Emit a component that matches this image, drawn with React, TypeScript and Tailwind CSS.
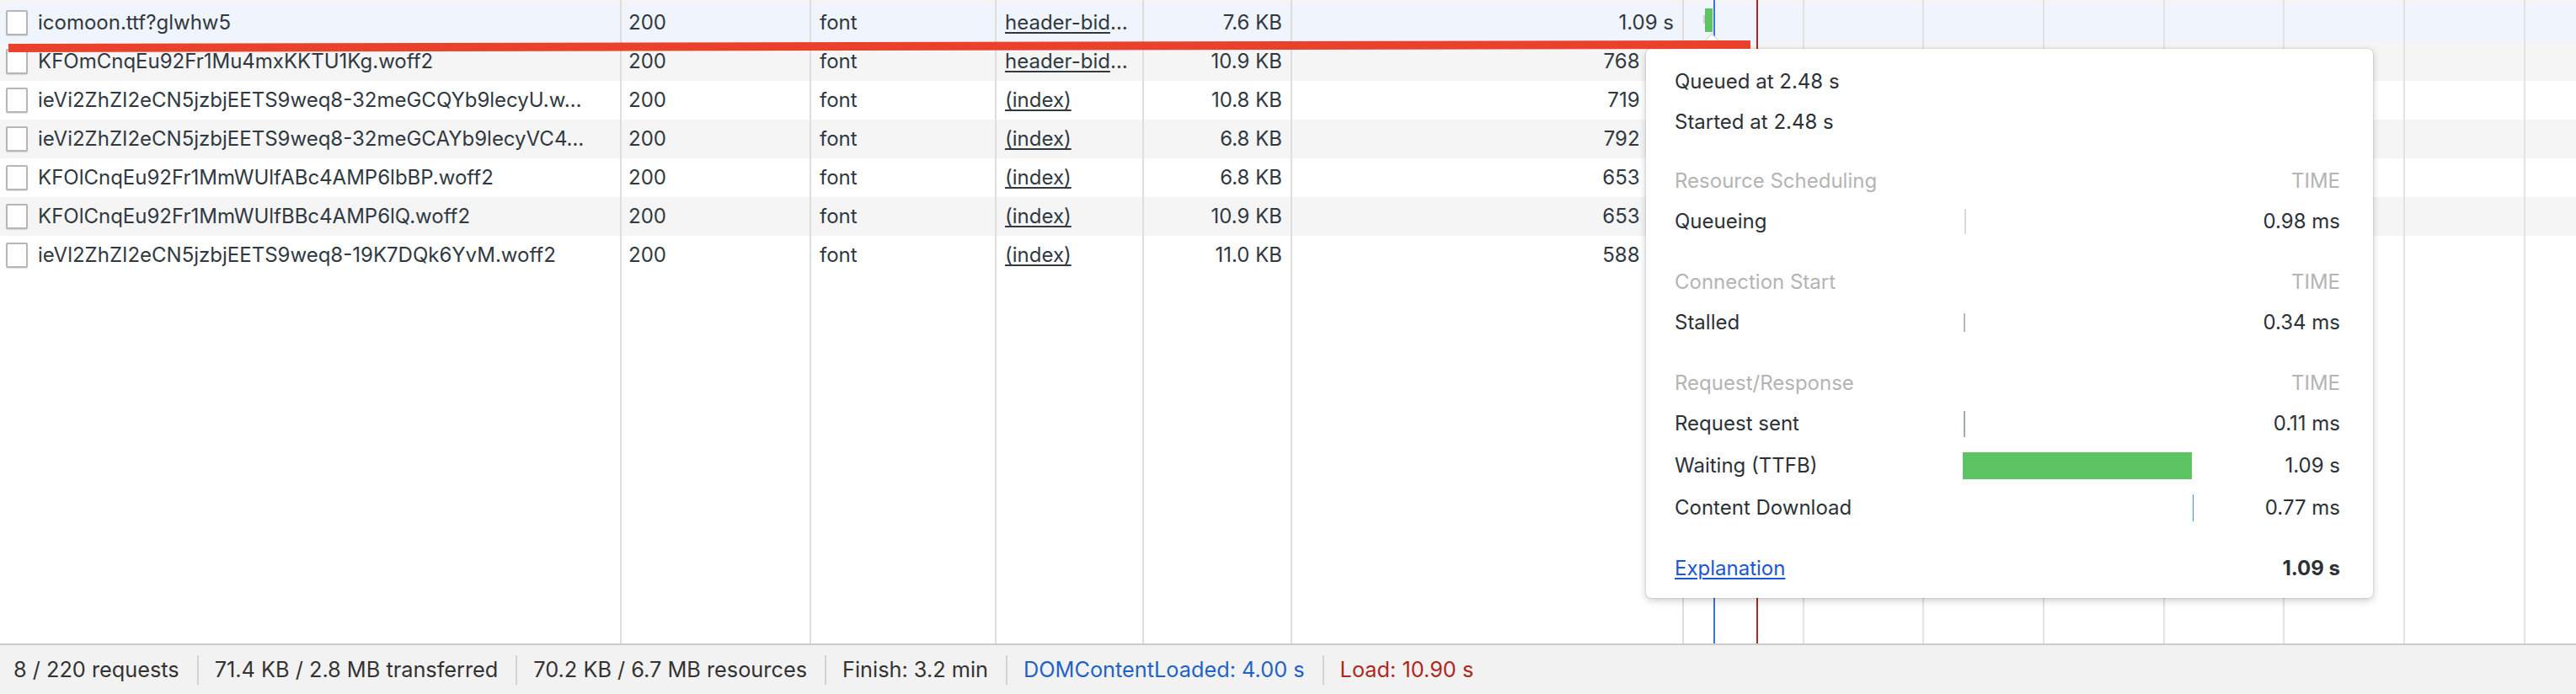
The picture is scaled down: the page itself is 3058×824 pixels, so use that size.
import React from "react";

const COLS = "grid grid-cols-[738px_225px_220px_175px_176px_465px_1fr]";
const B = "border-r-2 border-[#dedede]";

type Row = { name: string; size: string; time: string; hb: boolean };

const rows: Row[] = [
  { name: "icomoon.ttf?glwhw5", hb: true, size: "7.6 KB", time: "1.09 s" },
  { name: "KFOmCnqEu92Fr1Mu4mxKKTU1Kg.woff2", hb: true, size: "10.9 KB", time: "768 ms" },
  { name: "ieVi2ZhZI2eCN5jzbjEETS9weq8-32meGCQYb9lecyU.w…", hb: false, size: "10.8 KB", time: "719 ms" },
  { name: "ieVi2ZhZI2eCN5jzbjEETS9weq8-32meGCAYb9lecyVC4…", hb: false, size: "6.8 KB", time: "792 ms" },
  { name: "KFOlCnqEu92Fr1MmWUlfABc4AMP6lbBP.woff2", hb: false, size: "6.8 KB", time: "653 ms" },
  { name: "KFOlCnqEu92Fr1MmWUlfBBc4AMP6lQ.woff2", hb: false, size: "10.9 KB", time: "653 ms" },
  { name: "ieVl2ZhZI2eCN5jzbjEETS9weq8-19K7DQk6YvM.woff2", hb: false, size: "11.0 KB", time: "588 ms" },
];

function EmptyCells() {
  return (
    <>
      <div className={B} />
      <div className={B} />
      <div className={B} />
      <div className={B} />
      <div className={B} />
      <div className={B} />
      <div />
    </>
  );
}

function TableRow({ r, i }: { r: Row; i: number }) {
  const bg = i === 0 ? "bg-[#eff4fd]" : i % 2 === 1 ? "bg-[#f5f5f5]" : "bg-white";
  return (
    <div className={`${COLS} h-[46px] leading-[46px] ${bg}`}>
      <div className={`${B} flex items-center pl-[7px] pr-[6px] gap-[12px] overflow-hidden`}>
        <div className="shrink-0 w-[26px] h-[30px] border-2 border-[#b6b6b6] bg-white rounded-[2px] shadow-[0_1px_1px_rgba(0,0,0,0.12)]" />
        <span className="truncate">{r.name}</span>
      </div>
      <div className={`${B} pl-[8px]`}>200</div>
      <div className={`${B} pl-[10px]`}>font</div>
      <div className={`${B} pl-[10px] whitespace-nowrap overflow-hidden`}>
        {r.hb ? (
          <>
            <span className="underline decoration-2 underline-offset-[3px]">header-bid</span>…
          </>
        ) : (
          <span className="underline decoration-2 underline-offset-[3px]">(index)</span>
        )}
      </div>
      <div className={`${B} pr-[10px] text-right`}>{r.size}</div>
      <div className={`${B} pr-[10px] text-right`}>{r.time}</div>
      <div className="relative">
        {i === 0 && (
          <>
            <div className="absolute left-[23px] top-[14px] w-[2px] h-[10px] bg-[#cfcfcf]" />
            <div className="absolute left-[25px] top-[6px] w-[9px] h-[28px] bg-[#5cc462]" />
          </>
        )}
      </div>
    </div>
  );
}

function Header({ label, mt }: { label: string; mt: string }) {
  return (
    <div className={`grid grid-cols-[342px_274px_1fr] h-[48px] items-center text-[#b4b4b4] ${mt}`}>
      <span>{label}</span>
      <span />
      <span className="text-right">TIME</span>
    </div>
  );
}

function Timing({ label, value, h, bar }: { label: string; value: string; h: string; bar: React.ReactNode }) {
  return (
    <div className={`grid grid-cols-[342px_274px_1fr] items-center ${h}`}>
      <span>{label}</span>
      <div className="flex items-center h-full">{bar}</div>
      <span className="text-right">{value}</span>
    </div>
  );
}

function Sep() {
  return <div className="w-[2px] h-[35px] bg-[#d3d3d3] shrink-0" />;
}

export default function App() {
  return (
    <div className="relative w-[3058px] h-[824px] overflow-hidden bg-white text-[24px] text-[#303942] font-['Inter','Liberation_Sans',Arial,sans-serif] flex flex-col">
      {/* table */}
      <div className="relative flex-1 flex flex-col">
        <div className={`${COLS} h-[4px] bg-[#f5f5f5]`}>
          <EmptyCells />
        </div>
        {rows.map((r, i) => (
          <TableRow key={i} r={r} i={i} />
        ))}
        <div className={`${COLS} flex-1`}>
          <EmptyCells />
        </div>

        {/* waterfall grid overlay */}
        <div className="absolute top-0 bottom-0 left-[1999px] right-0 flex pointer-events-none">
          <div className="shrink-0 w-[142.67px] h-full border-r-2 border-[#e3e3e3]" />
          <div className="shrink-0 w-[142.67px] h-full border-r-2 border-[#e3e3e3]" />
          <div className="shrink-0 w-[142.67px] h-full border-r-2 border-[#e3e3e3]" />
          <div className="shrink-0 w-[142.67px] h-full border-r-2 border-[#e3e3e3]" />
          <div className="shrink-0 w-[142.67px] h-full border-r-2 border-[#e3e3e3]" />
          <div className="shrink-0 w-[142.67px] h-full border-r-2 border-[#e3e3e3]" />
          <div className="shrink-0 w-[142.67px] h-full border-r-2 border-[#e3e3e3]" />
          <div className="absolute top-0 bottom-0 left-[35px] w-[2px] bg-[#3a78d8]" />
          <div className="absolute top-0 bottom-0 left-[86px] w-[2px] bg-[#b5261e]" />
        </div>
      </div>

      {/* status bar */}
      <div className="h-[60px] shrink-0 border-t-2 border-[#cbcbcb] bg-[#f2f2f2] flex items-center text-[25.3px] text-[#333333] whitespace-nowrap">
        <span className="pl-[16px] pr-[21px]">8 / 220 requests</span>
        <Sep />
        <span className="pl-[19px] pr-[21px]">71.4 KB / 2.8 MB transferred</span>
        <Sep />
        <span className="pl-[19px] pr-[21px]">70.2 KB / 6.7 MB resources</span>
        <Sep />
        <span className="pl-[19px] pr-[21px]">Finish: 3.2 min</span>
        <Sep />
        <span className="pl-[19px] pr-[21px] text-[#1f62c8]">DOMContentLoaded: 4.00 s</span>
        <Sep />
        <span className="pl-[19px] pr-[21px] text-[#b0261c]">Load: 10.90 s</span>
      </div>

      {/* timing popup */}
      <div className="absolute left-[1954px] top-[58px] w-[863px] h-[652px] bg-white rounded-[6px] shadow-[0_3px_10px_rgba(0,0,0,0.2),0_0_2px_rgba(0,0,0,0.25)] pl-[34px] pr-[39px] pt-[15px] flex flex-col text-[#2c3138] z-10">
        <div className="absolute left-[65px] top-[-13px] w-[26px] h-[26px] rotate-45 bg-white border-l border-t border-[#d0d0d0]" />
        <div className="relative h-[48px] flex items-center">Queued at 2.48 s</div>
        <div className="h-[48px] flex items-center">Started at 2.48 s</div>
        <Header label="Resource Scheduling" mt="mt-[22px]" />
        <Timing
          label="Queueing"
          value="0.98 ms"
          h="h-[48px]"
          bar={<div className="ml-[2px] w-[2px] h-[30px] bg-[#dadada]" />}
        />
        <Header label="Connection Start" mt="mt-[24px]" />
        <Timing
          label="Stalled"
          value="0.34 ms"
          h="h-[48px]"
          bar={<div className="ml-[1px] w-[2px] h-[22px] bg-[#b8b8b8]" />}
        />
        <Header label="Request/Response" mt="mt-[24px]" />
        <Timing
          label="Request sent"
          value="0.11 ms"
          h="h-[48px]"
          bar={<div className="ml-[1px] w-[2px] h-[31px] bg-[#a3acb5]" />}
        />
        <Timing
          label="Waiting (TTFB)"
          value="1.09 s"
          h="h-[52px]"
          bar={<div className="w-[272px] h-[32px] bg-[#5cc462]" />}
        />
        <Timing
          label="Content Download"
          value="0.77 ms"
          h="h-[48px]"
          bar={<div className="ml-[273px] w-[2px] h-[32px] bg-[#3d93e6]" />}
        />
        <div className="mt-[24px] h-[48px] flex items-center justify-between">
          <span className="text-[#1a56d6] underline decoration-2 underline-offset-[3px]">Explanation</span>
          <span className="font-bold">1.09 s</span>
        </div>
      </div>

      {/* red annotation stroke */}
      <div className="absolute left-[10px] top-[52px] w-[2068px] h-[10px] bg-[#e9412b] origin-left rotate-[-0.11deg] z-20" />
    </div>
  );
}
